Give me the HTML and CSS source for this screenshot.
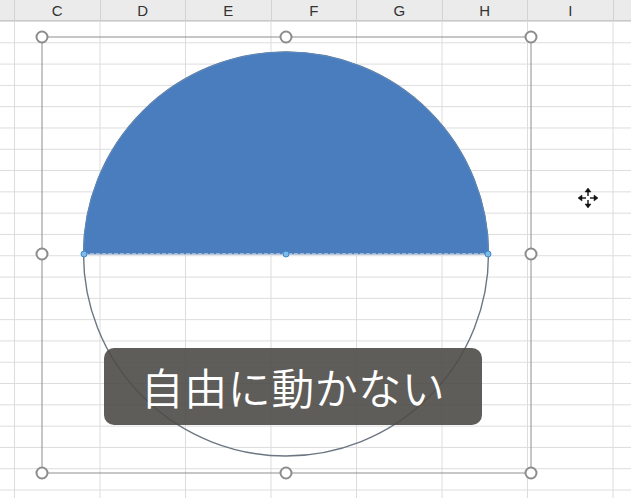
FILE: index.html
```html
<!DOCTYPE html>
<html lang="ja">
<head>
<meta charset="utf-8">
<title>Excel shape</title>
<link rel="stylesheet" href="styles.css">
</head>
<body>
<div class="sheet">
  <div class="colhead">
    <div class="hc hc-edge"></div>
    <div class="hc">C</div>
    <div class="hc">D</div>
    <div class="hc">E</div>
    <div class="hc">F</div>
    <div class="hc">G</div>
    <div class="hc">H</div>
    <div class="hc">I</div>
    <div class="hc hc-rest"></div>
  </div>
  <div class="grid"></div>

  <svg class="shape" width="631" height="498" viewBox="0 0 631 498" xmlns="http://www.w3.org/2000/svg">
    <rect x="42" y="37" width="489" height="436" fill="none" stroke="#8e8e8e" stroke-width="1"/>
    <ellipse cx="286" cy="254" rx="202.5" ry="202" fill="none" stroke="#6b7683" stroke-width="1.4"/>
    <path d="M83.5 254 A202.5 202 0 0 1 488.5 254 Z" fill="#4a7dbd" stroke="#5a8ac4" stroke-width="1"/>
    <line x1="84" y1="254" x2="488" y2="254" stroke="#b8c8dc" stroke-width="1.5" stroke-dasharray="4 2"/>
    <g fill="#ffffff" stroke="#8c8c8c" stroke-width="2">
      <circle cx="42" cy="37" r="5.5"/>
      <circle cx="286" cy="37" r="5.5"/>
      <circle cx="531" cy="37" r="5.5"/>
      <circle cx="42" cy="254" r="5.5"/>
      <circle cx="531" cy="254" r="5.5"/>
      <circle cx="42" cy="473" r="5.5"/>
      <circle cx="286" cy="473" r="5.5"/>
      <circle cx="531" cy="473" r="5.5"/>
    </g>
    <g fill="#7dbbe9" stroke="#3f86c8" stroke-width="1">
      <circle cx="84" cy="254" r="3"/>
      <circle cx="286" cy="254" r="3"/>
      <circle cx="488" cy="254" r="3"/>
    </g>
    <g class="move" stroke="#111" stroke-width="1.4" fill="#111">
      <line x1="588" y1="192" x2="588" y2="196"/>
      <line x1="588" y1="200" x2="588" y2="204"/>
      <line x1="582" y1="198" x2="586" y2="198"/>
      <line x1="590" y1="198" x2="594" y2="198"/>
      <path d="M588 188 L585 192 L591 192 Z" stroke-width="0.5"/>
      <path d="M588 208 L585 204 L591 204 Z" stroke-width="0.5"/>
      <path d="M578 198 L582 195 L582 201 Z" stroke-width="0.5"/>
      <path d="M598 198 L594 195 L594 201 Z" stroke-width="0.5"/>
    </g>
  </svg>

  <div class="caption">自由に動かない</div>
</div>
</body>
</html>
```
FILE: styles.css
```css
html, body {
  margin: 0;
  padding: 0;
  background: #ffffff;
}

.sheet {
  position: relative;
  width: 631px;
  height: 498px;
  overflow: hidden;
  font-family: "Liberation Sans", "Noto Sans", sans-serif;
}

.colhead {
  display: flex;
  height: 21px;
  background: #ebebeb;
  border-bottom: 1px solid #c9c9c9;
  box-sizing: border-box;
}

.hc {
  flex: 0 0 85.5px;
  box-sizing: border-box;
  border-left: 1px solid #d3d3d3;
  display: flex;
  align-items: center;
  justify-content: center;
  font-size: 15px;
  color: #333333;
  padding-top: 1px;
}

.hc-edge {
  flex: 0 0 14px;
  border-left: none;
}

.hc-rest {
  flex: 1 1 auto;
}

.grid {
  height: 477px;
  background-color: #ffffff;
  background-image:
    linear-gradient(to right, #dcdcdc 1px, transparent 1px),
    linear-gradient(to bottom, #dcdcdc 1px, transparent 1px);
  background-size: 85.5px 100%, 100% 21.3px;
  background-position: 14px 0, 0 0;
}

.shape {
  position: absolute;
  left: 0;
  top: 0;
}

.caption {
  position: absolute;
  left: 104px;
  top: 348px;
  width: 378px;
  height: 77px;
  border-radius: 10px;
  background: rgba(78, 75, 71, 0.9);
  color: #ffffff;
  font-family: "Noto Sans CJK JP", "Noto Sans", sans-serif;
  font-size: 43px;
  font-weight: 350;
  display: flex;
  align-items: center;
  justify-content: center;
  letter-spacing: 0.5px;
  padding-bottom: 2px;
  box-sizing: border-box;
}
```
